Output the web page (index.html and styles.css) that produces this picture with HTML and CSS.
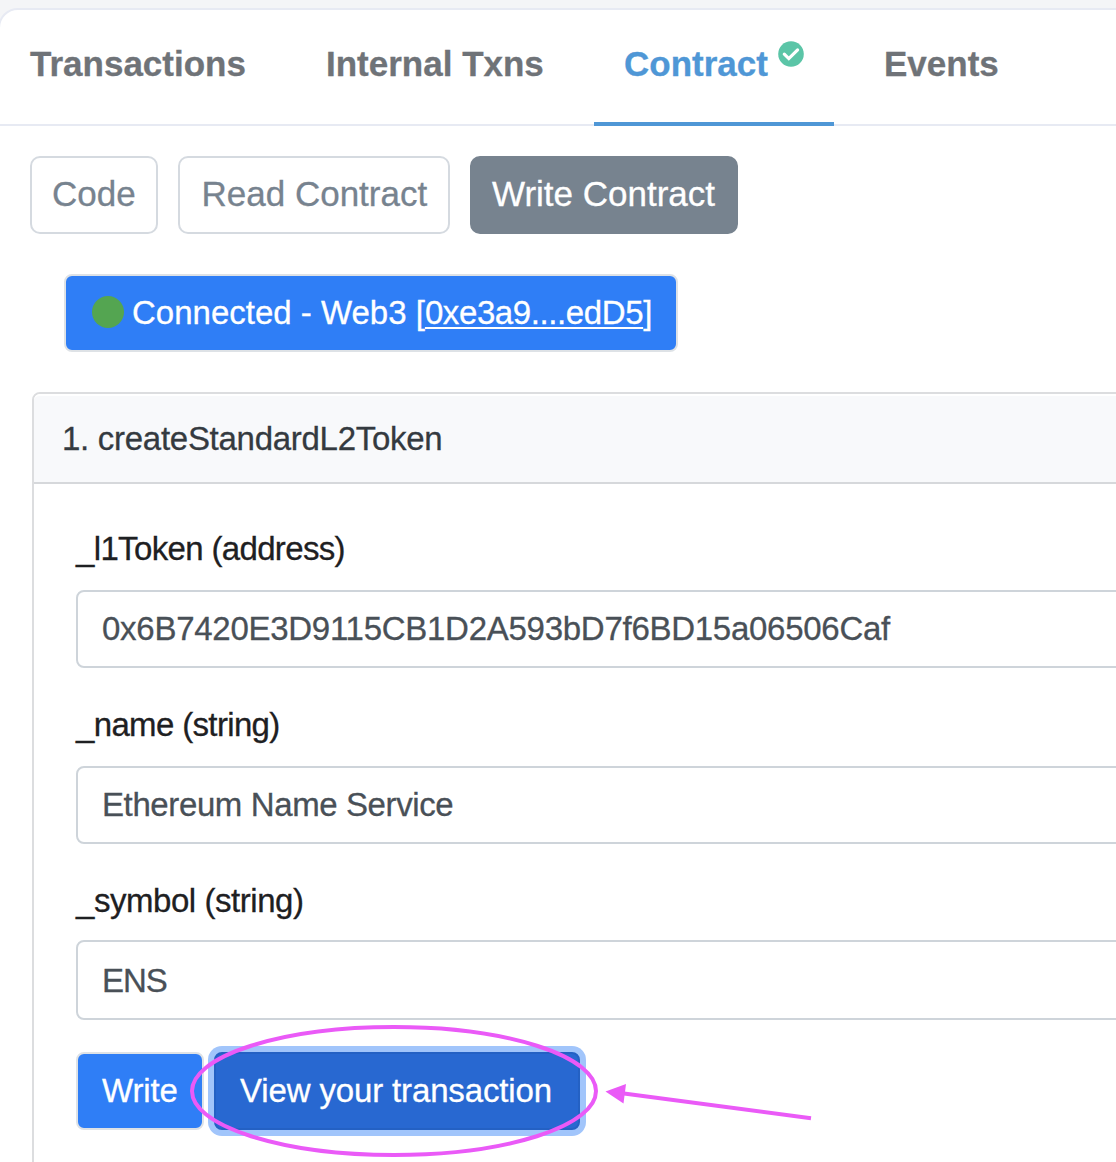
FILE: index.html
```html
<!DOCTYPE html>
<html lang="en">
<head>
<meta charset="utf-8">
<title>Contract</title>
<link rel="stylesheet" href="styles.css">
</head>
<body>
<main class="panel">
  <nav class="tabs">
    <a class="tab tab-transactions"><span>Transactions</span></a>
    <a class="tab tab-internal"><span>Internal Txns</span></a>
    <a class="tab tab-contract active"><span>Contract</span>
      <svg class="verified" viewBox="0 0 26 26"><circle cx="13" cy="13" r="12.8" fill="#5bc5a7"/><path d="M6.3 13.2l4.5 4.4 8.8-8.7" fill="none" stroke="#fff" stroke-width="3.2" stroke-linecap="round"/></svg>
    </a>
    <a class="tab tab-events"><span>Events</span></a>
  </nav>
  <div class="pills">
    <button class="pill pill-code"><span>Code</span></button>
    <button class="pill pill-read"><span>Read Contract</span></button>
    <button class="pill pill-write selected"><span>Write Contract</span></button>
  </div>
  <button class="btn connect"><i class="dot"></i><span>Connected - Web3 [<u>0xe3a9....edD5</u>]</span></button>
  <section class="card">
    <header class="card-header"><span>1. createStandardL2Token</span></header>
    <form class="card-body">
      <label class="label label-token"><span>_l1Token (address)</span></label>
      <div class="input input-token"><span>0x6B7420E3D9115CB1D2A593bD7f6BD15a06506Caf</span></div>
      <label class="label label-name"><span>_name (string)</span></label>
      <div class="input input-name"><span>Ethereum Name Service</span></div>
      <label class="label label-symbol"><span>_symbol (string)</span></label>
      <div class="input input-symbol"><span>ENS</span></div>
      <div class="actions">
        <button type="button" class="btn write"><span>Write</span></button>
        <button type="button" class="btn view"><span>View your transaction</span></button>
      </div>
    </form>
  </section>
</main>
<svg class="annotation" viewBox="0 0 640 142">
  <ellipse cx="214" cy="71" rx="202" ry="64" fill="none" stroke="#ea5af7" stroke-width="4"/>
  <path d="M444 73.5L631 98.3" stroke="#ea5af7" stroke-width="4"/>
  <path d="M425.5 71.5L446 64L443.5 83.5Z" fill="#ea5af7"/>
</svg>
</body>
</html>
```
FILE: styles.css
```css
* { box-sizing: border-box; }
body {
  margin: 0;
  height: 1162px;
  overflow: hidden;
  background: #f4f5f7;
  font-family: "Liberation Sans", Arial, sans-serif;
  font-size: 33px;
  color: #1e2022;
}
span { white-space: nowrap; -webkit-text-stroke: 0.3px currentColor; }
button { font: inherit; padding: 0; margin: 0; }
.panel {
  margin: 8px -20px 0 -2px;
  height: 1180px;
  background: #fff;
  border: 2px solid #e7eaf3;
  border-radius: 20px;
}
.tabs {
  display: flex;
  gap: 20px;
  height: 116px;
  border-bottom: 2px solid #e7eaf3;
}
.tab {
  display: flex;
  height: 116px;
  padding: 33px 0 0 30px;
  line-height: 42px;
  font-size: 35px;
  font-weight: 700;
  color: #6f7378;
}
.tab-transactions { width: 276px; }
.tab-internal { width: 278px; }
.tab-contract { width: 240px; gap: 10px; }
.tab.active { color: #4f97d6; border-bottom: 4px solid #4f97d6; }
.verified { width: 26px; height: 26px; margin-top: -2px; }
.pills { display: flex; gap: 20px; margin: 30px 0 0 30px; }
.pill {
  display: flex;
  height: 78px;
  padding-left: 20px;
  line-height: 72px;
  font-size: 35px;
  color: #77838f;
  background: #fff;
  border: 2px solid #d5dae0;
  border-radius: 10px;
}
.pill-code { width: 128px; }
.pill-read { width: 272px; padding-left: 21.5px; }
.pill-write { width: 268px; }
.pill.selected { color: #fff; background: #77838f; border-color: #77838f; }
.btn {
  display: flex;
  align-items: center;
  height: 78px;
  color: #fff;
  background: #2f7ef6;
  border: 2px solid #dee2e6;
  border-radius: 8px;
}
.connect { width: 614px; margin: 40px 0 0 64px; padding: 0 0 0 26px; gap: 8px; }
.dot { width: 32px; height: 32px; border-radius: 50%; background: #54a551; margin-top: -2px; }
.connect u {
  letter-spacing: -0.4px;
  text-decoration-thickness: 2px;
  text-underline-offset: 3px;
  text-decoration-skip-ink: none;
}
.card {
  margin: 40px 0 0 32px;
  height: 800px;
  border: 2px solid #dcdddf;
  border-radius: 8px;
}
.card-header {
  height: 90px;
  padding-left: 28px;
  line-height: 86px;
  letter-spacing: -0.28px;
  color: #343a40;
  background: #f8f9fb;
  border-top: 2px solid #fff;
  border-bottom: 2px solid #d6d8db;
  border-radius: 6px 0 0 0;
}
.card-body { padding: 40px 0 0 42px; }
.label { display: block; height: 66px; line-height: 50px; }
.label-token, .label-name { letter-spacing: -0.65px; }
.label-symbol { height: 64px; letter-spacing: -0.45px; }
.input {
  height: 78px;
  padding-left: 24px;
  margin-bottom: 32px;
  line-height: 74px;
  color: #495057;
  background: #fff;
  border: 2px solid #ced4da;
  border-radius: 8px;
}
.input-token { letter-spacing: -0.27px; }
.input-name { letter-spacing: -0.39px; }
.input-symbol { height: 80px; line-height: 78px; letter-spacing: -1px; }
.actions { display: flex; gap: 10px; }
.write { width: 128px; padding-left: 24px; letter-spacing: -0.15px; }
.view {
  width: 366px;
  padding-left: 24px;
  letter-spacing: -0.14px;
  background: #2868d1;
  border-color: #2461c4;
  box-shadow: 0 0 0 6px #a1c5fb;
}
.annotation { position: absolute; left: 180px; top: 1020px; width: 640px; height: 142px; }
```
